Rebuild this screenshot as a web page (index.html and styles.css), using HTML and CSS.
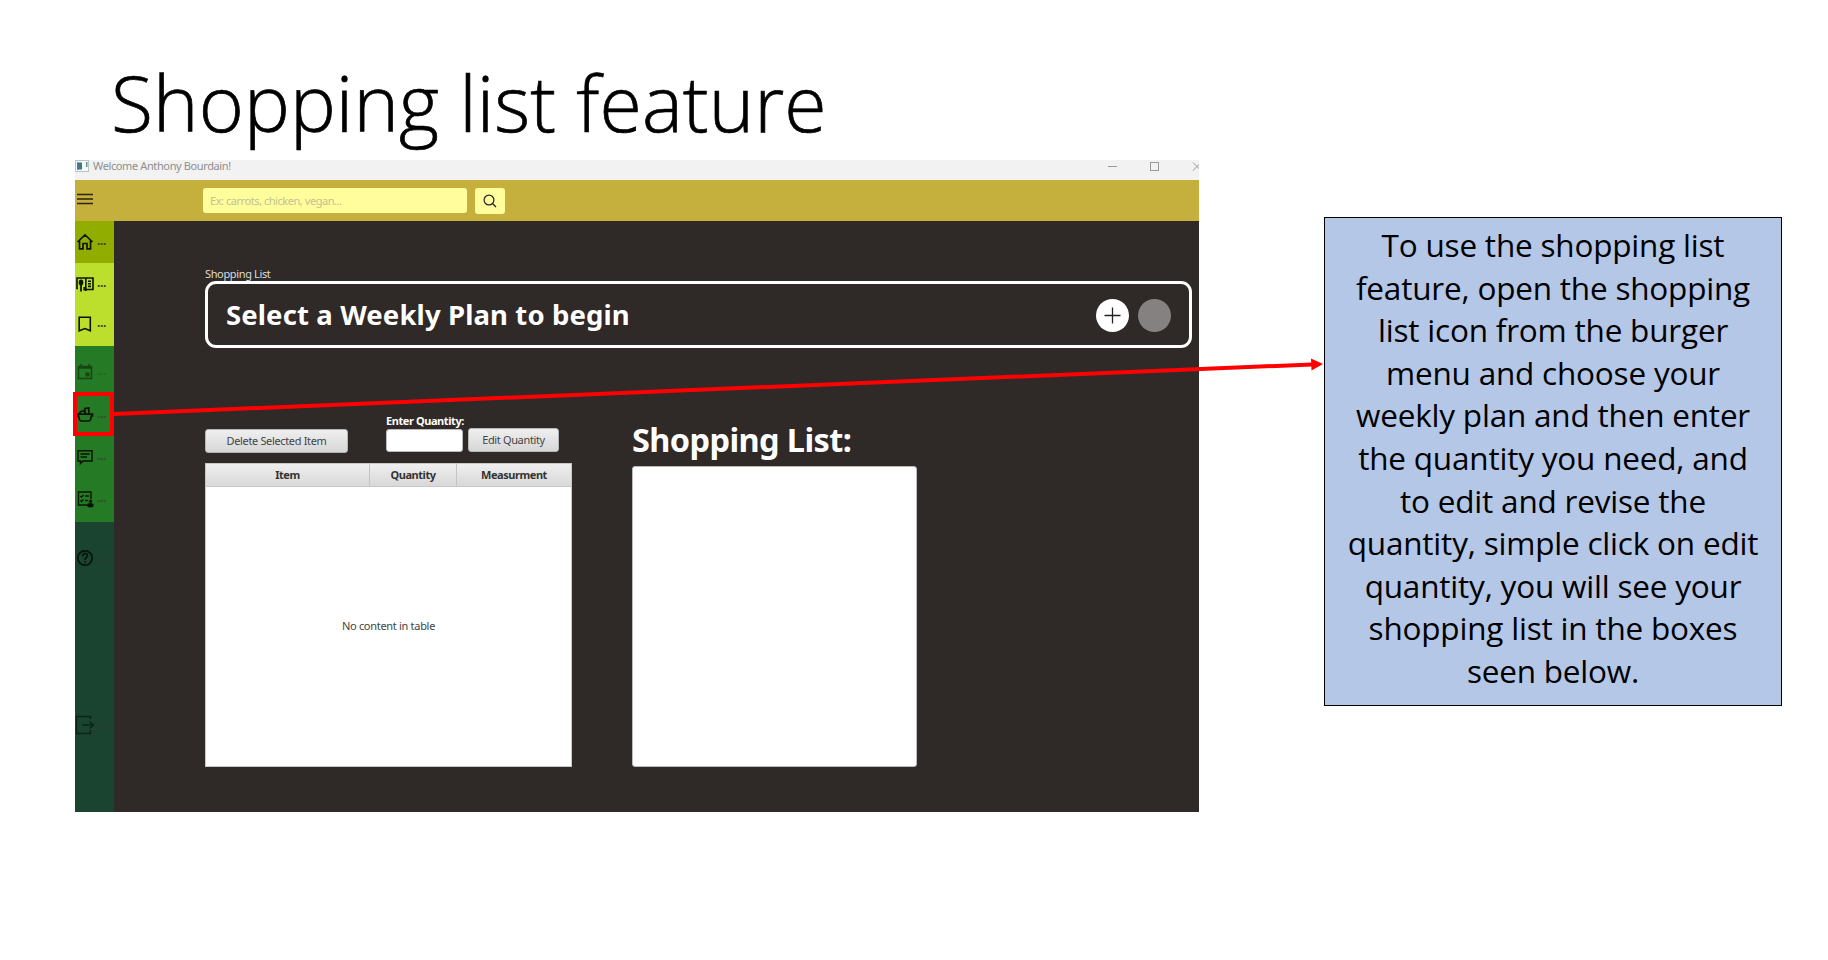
FILE: index.html
```html
<!DOCTYPE html>
<html lang="en">
<head>
<meta charset="utf-8">
<title>Shopping list feature</title>
<link rel="stylesheet" href="styles.css">
</head>
<body>
<main class="slide">
  <section class="left">
    <h1 class="headline"><span>Shopping list feature</span></h1>
    <div class="app">
      <div class="titlebar">
        <svg class="app-icon" width="14" height="12" viewBox="0 0 14 12"><rect x=".5" y=".5" width="13" height="11" fill="#f7f8f9" stroke="#b9c3c8"/><rect x="2" y="2.500" width="5" height="7" fill="#38806f"/><rect x="2" y="2.500" width="2" height="7" fill="#4678a0"/><rect x="11" y="2" width="1.500" height="5" fill="#56a096"/></svg>
        <span class="window-title">Welcome Anthony Bourdain!</span>
        <svg class="window-controls" width="92" height="12" viewBox="0 0 92 12" fill="none" stroke="#999"><path d="M1 6.500h9"/><rect x="43.500" y="2.500" width="8" height="8"/><path d="M86 2.500l8 8M86 10.500l8-8"/></svg>
      </div>
      <div class="toolbar">
        <svg class="burger" width="17" height="12" viewBox="0 0 17 12"><path d="M1 1.500h16M1 6h16M1 10.500h16" stroke="#2a250d" stroke-width="1.500"/></svg>
        <div class="search">Ex: carrots, chicken, vegan...</div>
        <div class="search-button"><svg width="14" height="14" viewBox="0 0 14 14" fill="none" stroke="#222" stroke-width="1.200"><circle cx="6" cy="6" r="4.900"/><path d="M9.500 9.500L13 13"/></svg></div>
      </div>
      <div class="body">
        <nav class="sidebar">
          <div class="group olive">
            <div class="item"><svg width="18" height="18" viewBox="0 0 18 18" fill="none" stroke="#0c1400" stroke-width="1.700"><path d="M1.500 9L9 2 16.500 9M3.500 7.500V15.800H7V10.500H11V15.800H14.500V7.500"/></svg><i>...</i></div>
          </div>
          <div class="group lime">
            <div class="item"><svg width="18" height="18" viewBox="0 0 18 18" fill="none" stroke="#0c1400" stroke-width="1.600"><path d="M2 13.500H1V3H17V14.500H10M9.800 3V16M12 6.200H15M12 8.800H15M12 11.400H15"/><path d="M5 8v8.500M8.300 12v3.500" stroke-width="1.800"/><ellipse cx="5" cy="7.500" rx="2.300" ry="2.900" fill="#0c1400" stroke="none"/></svg><i>...</i></div>
            <div class="item mark"><svg width="18" height="18" viewBox="0 0 18 18" fill="none" stroke="#0c1400" stroke-width="1.600"><path d="M3.200 2.300H14.300V15.800L9 13.600 3.200 15.800Z"/></svg><i>...</i></div>
          </div>
          <div class="group green">
            <div class="item faded"><svg width="18" height="18" viewBox="0 0 18 18" fill="none" stroke="#0c1400" stroke-width="1.500"><path d="M2.500 3.500h13v12h-13zM2.500 5h13M5 1v3M13 1v3" /><path d="M9.500 9.500h4v4h-4z" fill="#0c1400" stroke="none"/></svg><i>...</i></div>
            <div class="item pot"><svg width="18" height="18" viewBox="0 0 18 18" fill="none" stroke="#0c1400" stroke-width="1.700"><path d="M1.500 8.200h15v1.600H15.500L14.500 13.500Q14 15 12.500 15H5.500Q4 15 3.500 13.500L2.500 9.800H1.500ZM3.500 8q.5-3 3-3 2.500 0 3.200 3M8.300 2.500L12.800 2V8M8.300 2.500L9.500 5.500"/></svg><i>...</i></div>
            <div class="item"><svg width="18" height="18" viewBox="0 0 18 18" fill="none" stroke="#0c1400" stroke-width="1.500"><path d="M2 2.700H16V13H7L4.500 15.500V13H2ZM4.500 6H13.500M4.500 9H11"/></svg><i>...</i></div>
            <div class="item"><svg width="18" height="18" viewBox="0 0 18 18" fill="none" stroke="#0c1400" stroke-width="1.400"><path d="M11 15H2.500V2H15V9M4.500 6l1 1 2-2M9 6H13M4.500 10.500l1 1 2-2M9 10.500H12"/><g fill="#0c1400" stroke="none"><circle cx="14.500" cy="11.200" r="1.700"/><ellipse cx="14.300" cy="15.300" rx="3.300" ry="2.200"/></g></svg><i>...</i></div>
          </div>
          <div class="group forest">
            <div class="item help"><svg width="18" height="18" viewBox="0 0 18 18" fill="none" stroke="#07130c" stroke-width="1.700"><circle cx="9" cy="9" r="7.200"/><path d="M6.700 7.200q0-2.500 2.400-2.500 2.300 0 2.300 2 0 1-1.200 1.900Q9 9.500 9 11M9 12.200v1.500"/></svg><i>...</i></div>
            <div class="item logout"><svg width="20" height="20" viewBox="0 0 20 20" fill="none" stroke="#0c2316" stroke-width="1.300"><path d="M15.500 4V1.500H1.500V18.500H15.500V15M7 10H18.500M14.500 6.500L18.500 10l-4 3.500"/></svg><i>...</i></div>
          </div>
        </nav>
        <div class="content">
          <div class="section-label">Shopping List</div>
          <div class="plan">
            <span class="plan-title">Select a Weekly Plan to begin</span>
            <span class="add"><svg width="17" height="17" viewBox="0 0 17 17"><path d="M8.500 .5v16M.5 8.500h16" stroke="#222" stroke-width="1.300"/></svg></span>
            <span class="dot"></span>
          </div>
          <div class="workspace">
            <div class="editor">
              <div class="controls">
                <div class="button delete">Delete Selected Item</div>
                <div class="quantity"><label>Enter Quantity:</label><div class="field"></div></div>
                <div class="button edit">Edit Quantity</div>
              </div>
              <div class="table">
                <div class="thead"><span>Item</span><span>Quantity</span><span>Measurment</span></div>
                <div class="empty">No content in table</div>
              </div>
            </div>
            <div class="list">
              <h2><span>Shopping List:</span></h2>
              <div class="listbox"></div>
            </div>
          </div>
        </div>
      </div>
    </div>
  </section>
  <aside class="callout">To use the shopping list<br>feature, open the shopping<br>list icon from the burger<br>menu and choose your<br>weekly plan and then enter<br>the quantity you need, and<br>to edit and revise the<br>quantity, simple click on edit<br>quantity, you will see your<br>shopping list in the boxes<br>seen below.</aside>
  <svg class="pointer" width="1828" height="960" viewBox="0 0 1828 960"><rect x="75" y="394" width="37" height="40" fill="none" stroke="#f00" stroke-width="4"/><path d="M114 414L1312 364.400" stroke="#f00" stroke-width="4"/><path d="M1311 358.500L1323 364 1311.500 370.500Z" fill="#f00"/></svg>
</main>
</body>
</html>
```
FILE: styles.css
```css
* { box-sizing: border-box; }
body { margin: 0; background: #fff; }
.slide { position: relative; width: 1828px; height: 960px; display: flex; overflow: hidden; font-family: "Noto Sans", sans-serif; }
.left { width: 1124px; margin-left: 75px; }
.headline { margin: 0; height: 160px; padding: 48px 0 0 36px; font: 330 77px/110px "Open Sans", sans-serif; white-space: nowrap; color: #000; letter-spacing: .12px; -webkit-text-stroke: .7px #000; }
.app { height: 652px; display: flex; flex-direction: column; background: #2f2928; font-size: 11px; }
.titlebar { height: 20px; background: #f2f2f2; display: flex; align-items: flex-start; color: #8f8f8f; }
.window-title { margin-left: 4px; line-height: 12px; letter-spacing: -.38px; }
.window-controls { margin-left: auto; }
.toolbar { height: 41px; background: #c5b03d; display: flex; align-items: flex-start; }
.burger { margin: 13px 0 0 1px; }
.search { margin: 8px 0 0 110px; width: 264px; height: 25px; border-radius: 3px; background: #fffd9c; padding-left: 7px; line-height: 26px; color: #c4c191; letter-spacing: -.45px; }
.search-button { margin: 8px 0 0 8px; width: 30px; height: 26px; border-radius: 3px; background: #fffd9c; display: flex; align-items: center; justify-content: center; }
.body { flex: 1; display: flex; }
.sidebar { width: 39px; display: flex; flex-direction: column; }
.group { display: flex; flex-direction: column; }
.olive { height: 42px; background: #91ae00; }
.lime { height: 83px; background: #bbdf2c; }
.green { height: 176px; padding-top: 5px; background: #257a25; }
.forest { flex: 1; background: #1a442f; }
.item { height: 42.400px; display: flex; align-items: center; padding-left: .5px; }
.item svg { flex: none; }
.item i { font: 700 12px/12px "Noto Sans", sans-serif; margin: 0 0 2px 3.500px; color: #38432a; letter-spacing: -.4px; }
.mark { height: 38px; }
.green .item i { color: #334f2b; }
.faded { opacity: .5; }
.help { margin-top: 15px; }
.forest .item i { color: #39382f; }
.logout { margin-top: 124px; padding-left: 0; }
.logout i { margin-left: 2px; }
.content { flex: 1; padding: 45px 7px 0 91px; }
.section-label { height: 15px; line-height: 15px; color: #dedede; letter-spacing: -.36px; }
.plan { height: 67px; border: 3px solid #fff; border-radius: 11px; display: flex; align-items: center; padding: 1px 18px 0 18px; }
.plan-title { flex: 1; font: 700 27.500px/40px "Noto Sans", sans-serif; color: #fff; white-space: nowrap; letter-spacing: .12px; }
.add, .dot { width: 33px; height: 33px; border-radius: 50%; background: #fff; display: flex; align-items: center; justify-content: center; }
.dot { margin-left: 9px; background: #858180; }
.workspace { display: flex; gap: 60px; padding-top: 64px; }
.editor { width: 367px; }
.controls { display: flex; height: 51px; align-items: flex-start; }
.button { height: 24px; margin-top: 17px; border: 1px solid #b5b5b5; border-radius: 3px; background: linear-gradient(#efefef, #d7d7d7); color: #444; text-align: center; line-height: 22px; letter-spacing: -.35px; }
.delete { width: 143px; }
.quantity { width: 77px; margin-left: 38px; }
.quantity label { display: block; height: 17px; font-weight: 700; line-height: 18px; color: #fff; white-space: nowrap; letter-spacing: -.42px; }
.field { height: 23px; background: #fff; border: 1px solid #bbb; border-radius: 3px; }
.edit { width: 91px; margin: 16px 0 0 5px; }
.table { height: 304px; border: 1px solid #c8c8c8; background: #fff; display: flex; flex-direction: column; }
.thead { height: 23px; display: grid; grid-template-columns: 163px 87px 1fr; background: linear-gradient(#efefef, #d8d8d8); border-bottom: 1px solid #c8c8c8; font-weight: 700; text-align: center; line-height: 22px; color: #333; letter-spacing: -.45px; }
.thead span + span { border-left: 1px solid #c4c4c4; }
.empty { flex: 1; display: flex; align-items: center; justify-content: center; color: #444; letter-spacing: -.3px; padding-bottom: 2px; }
.list { width: 285px; }
.list h2 { margin: 0; height: 54px; padding-top: 6px; font: 700 32.500px/44px "Noto Sans", sans-serif; color: #fff; white-space: nowrap; letter-spacing: -.6px; }
.listbox { height: 301px; background: #fff; border: 1px solid #bbb; border-radius: 3px; }
.callout { width: 458px; height: 489px; margin: 217px 0 0 125px; padding: 6px 0 0; border: 1px solid #000; background: #b4c7e7; text-align: center; font: 31.500px/42.600px "Open Sans", sans-serif; font-stretch: 88%; letter-spacing: -.2px; color: #000; white-space: nowrap; }
.pointer { position: absolute; left: 0; top: 0; pointer-events: none; }
```
